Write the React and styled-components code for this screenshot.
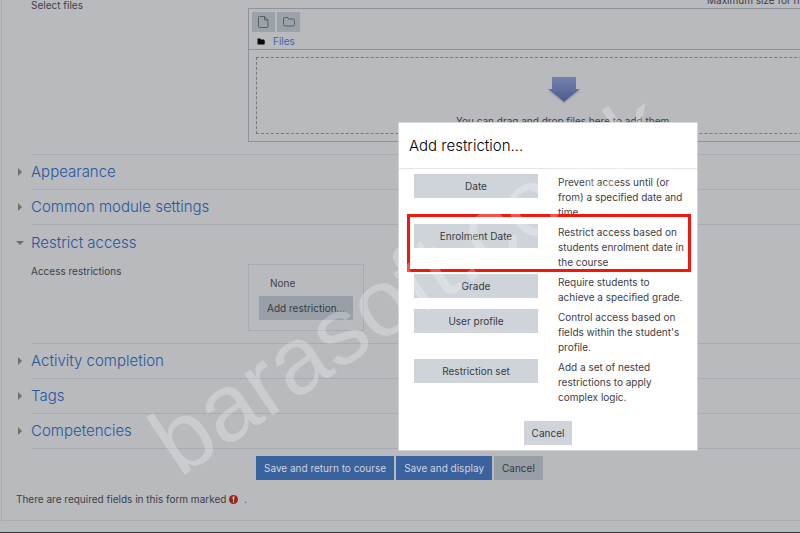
import React from "react";
import styled, { createGlobalStyle, css } from "styled-components";

const GlobalStyle = createGlobalStyle`
  * {
    box-sizing: border-box;
  }
  html,
  body {
    margin: 0;
    height: 100%;
    overflow: hidden;
  }
  body {
    font-family: Inter, "Liberation Sans", sans-serif;
    font-size: 10px;
    line-height: 15px;
    color: #3d4045;
    background-color: #b8babe;
  }
`;

const Page = styled.div`
  position: relative;
  display: flex;
  flex-direction: column;
  min-height: 100vh;
  overflow: hidden;
`;
const Main = styled.main`
  margin: -7px -93px 11px 1px;
  padding: 0 12px 13px 14px;
  border: 1px solid #abadb1;
  border-top: none;
`;
const Footer = styled.footer`
  flex: 1;
  background-color: #33373f;
`;
const Field = styled.div`
  display: grid;
  grid-template-columns: 217px minmax(0, 1fr);
`;
const FieldLabel = styled.div`
  padding-top: ${(props) => props.$top}px;
`;
const SizeNote = styled.div`
  padding-left: 459px;
  white-space: nowrap;
`;
const FileManager = styled.div`
  border: 1px solid #909297;
  height: 134px;
  display: flex;
  flex-direction: column;
`;
const Toolbar = styled.div`
  display: flex;
  gap: 2px;
  padding: 3px 3px 1px;
`;
const ToolButton = styled.button`
  width: 23px;
  height: 20px;
  padding: 0;
  border: none;
  background-color: #9ba2a9;
  color: #5a5f65;
  display: flex;
  align-items: center;
  justify-content: center;
`;
const PathBar = styled.div`
  display: flex;
  align-items: center;
  gap: 8px;
  padding: 0 8px;
  height: 16px;
`;
const DropArea = styled.div`
  flex: 1;
  border-top: 1px solid #909297;
  padding: 7px;
`;
const DropZone = styled.div`
  height: 100%;
  border: 1px dashed #76787c;
  display: flex;
  flex-direction: column;
  align-items: center;
  gap: 10px;
  padding-top: 18px;
`;
const Link = styled.a`
  color: #3a63ab;
  text-decoration: none;
`;
const Section = styled.section`
  margin-left: 15px;
  border-bottom: 1px solid #a8abaf;
`;
const Toggle = styled.button`
  display: flex;
  align-items: center;
  gap: 7px;
  height: ${(props) => (props.$open ? 36 : 34)}px;
  margin-left: -15px;
  padding: 0;
  border: none;
  background: none;
  color: #27579d;
  font-family: inherit;
  font-size: 15px;
  font-weight: 300;
  line-height: 20px;
`;
const Arrow = styled.svg`
  width: 8px;
  height: 8px;
  fill: #6d6f73;
`;
const Body = styled.div`
  padding-bottom: 12px;
`;
const Restrictions = styled.div`
  justify-self: start;
  display: flex;
  flex-direction: column;
  align-items: flex-start;
  gap: 5px;
  margin-top: 3px;
  padding: 11px 10px 10px;
  border: 1px solid #a8abaf;
`;
const None = styled.span`
  padding-left: 11px;
`;
const Button = styled.button`
  height: 24px;
  padding: 0 8px;
  border: none;
  font-family: inherit;
  font-size: 10px;
  line-height: 15px;
  white-space: nowrap;
  color: #373a3f;
  background-color: #ced4d9;
  ${(props) =>
    props.$dimmed &&
    css`
      background-color: #989fa6;
    `}
  ${(props) =>
    props.$primary &&
    css`
      color: #d0d5dd;
      background-color: #39629e;
    `}
`;
const Actions = styled.div`
  display: flex;
  gap: 2px;
  padding: 7px 0 0 240px;
`;
const Required = styled.p`
  display: flex;
  align-items: center;
  gap: 3px;
  margin: 12px 0 0;
`;

const Modal = styled.div`
  position: absolute;
  top: 122px;
  left: 398px;
  width: 300px;
  border: 1px solid #d4d5d7;
  background-color: #fff;
`;
const ModalTitle = styled.h2`
  margin: 0;
  padding: 13px 10px 12px;
  border-bottom: 1px solid #e3e5e8;
  font-size: 15px;
  font-weight: 300;
  line-height: 20px;
  color: #000;
`;
const Options = styled.ul`
  display: flex;
  flex-direction: column;
  gap: 4px;
  margin: 0;
  padding: 5px 11px 0 15px;
  list-style: none;
`;
const Option = styled.li`
  position: relative;
  display: grid;
  grid-template-columns: 124px minmax(0, 1fr);
  gap: 20px;
  align-items: start;
`;
const Description = styled.span`
  padding-top: 1px;
`;
const Highlight = styled.div`
  position: absolute;
  inset: -10px -5px -2px -7px;
  border: 3px solid #f0180c;
  pointer-events: none;
`;
const ModalFooter = styled.div`
  display: flex;
  justify-content: center;
  padding: 16px 0 5px;
`;
const Watermark = styled.div`
  position: absolute;
  top: 229px;
  left: 110px;
  font-family: "Liberation Sans", Arial, sans-serif;
  font-size: 95px;
  line-height: 110px;
  color: rgba(255, 255, 255, 0.26);
  transform: rotate(-34deg);
  white-space: nowrap;
  pointer-events: none;
`;

const options = [
  {
    name: "Date",
    text: "Prevent access until (or from) a specified date and time.",
  },
  {
    name: "Enrolment Date",
    text: "Restrict access based on students enrolment date in the course",
    highlight: true,
  },
  { name: "Grade", text: "Require students to achieve a specified grade." },
  {
    name: "User profile",
    text: "Control access based on fields within the student's profile.",
  },
  {
    name: "Restriction set",
    text: "Add a set of nested restrictions to apply complex logic.",
  },
];

const FormSection = ({ title, open, children }) => (
  <Section>
    {title && (
      <Toggle type="button" aria-expanded={!!open} $open={open}>
        <Arrow viewBox="0 0 8 8">
          <path d={open ? "M0 2h8L4 6z" : "M2 0l4 4-4 4z"} />
        </Arrow>
        {title}
      </Toggle>
    )}
    {children && <Body>{children}</Body>}
  </Section>
);

const App = () => {
  return (
    <Page>
      <GlobalStyle />
      <Main>
        <FormSection>
          <Field>
            <FieldLabel $top={5}>Select files</FieldLabel>
            <div>
              <SizeNote>Maximum size for new files</SizeNote>
              <FileManager>
                <Toolbar>
                  <ToolButton type="button" aria-label="Add file">
                    <svg width="11" height="12" viewBox="0 0 11 12" fill="none" stroke="currentColor">
                      <path d="M1.500.5h5l3.500 3.500v6.500a1 1 0 0 1-1 1H1.500a1 1 0 0 1-1-1v-9a1 1 0 0 1 1-1zM6.500.5V4H10" />
                    </svg>
                  </ToolButton>
                  <ToolButton type="button" aria-label="Create folder">
                    <svg width="12" height="10" viewBox="0 0 12 10" fill="none" stroke="currentColor">
                      <path d="M2 .5h2.500L5.500 2H10a1.500 1.500 0 0 1 1.500 1.500v4A1.500 1.500 0 0 1 10 9H2A1.500 1.500 0 0 1 .5 7.500V2A1.500 1.500 0 0 1 2 .5z" />
                    </svg>
                  </ToolButton>
                </Toolbar>
                <PathBar>
                  <svg width="8" height="7" viewBox="0 0 8 7" fill="#08090a">
                    <path d="M.5.5H3l1 1h3v1h1l-.5 4h-7z" />
                  </svg>
                  <Link href="#files">Files</Link>
                </PathBar>
                <DropArea>
                  <DropZone>
                    <svg width="34" height="28" viewBox="0 0 34 28">
                      <defs>
                        <linearGradient id="arrow" x1="0" y1="0" x2="0" y2="1">
                          <stop offset="0" stopColor="#7584ae" />
                          <stop offset="1" stopColor="#4a5a92" />
                        </linearGradient>
                      </defs>
                      <path d="M5 2h24v13h5L17 28 0 15h5z" fill="#a9acb3" />
                      <path d="M5 1h24v12h4L17 26 1 13h4z" fill="url(#arrow)" />
                    </svg>
                    <span>You can drag and drop files here to add them.</span>
                  </DropZone>
                </DropArea>
              </FileManager>
            </div>
          </Field>
        </FormSection>
        <FormSection title="Appearance" />
        <FormSection title="Common module settings" />
        <FormSection title="Restrict access" open>
          <Field>
            <FieldLabel $top={3}>Access restrictions</FieldLabel>
            <Restrictions>
              <None>None</None>
              <Button type="button" $dimmed>
                Add restriction...
              </Button>
            </Restrictions>
          </Field>
        </FormSection>
        <FormSection title="Activity completion" />
        <FormSection title="Tags" />
        <FormSection title="Competencies" />
        <Actions>
          <Button type="submit" $primary>
            Save and return to course
          </Button>
          <Button type="submit" $primary>
            Save and display
          </Button>
          <Button type="button" $dimmed>
            Cancel
          </Button>
        </Actions>
        <Required>
          There are required fields in this form marked
          <svg width="9" height="9" viewBox="0 0 9 9">
            <circle cx="4.500" cy="4.500" r="4.500" fill="#98291f" />
            <path d="M3.500 1.500h2L5 5.500H4zM4 6h1v1.500H4z" fill="#d5cfcf" />
          </svg>
          <span>&nbsp;.</span>
        </Required>
      </Main>
      <Footer />

      <Modal role="dialog" aria-labelledby="modal-title">
        <ModalTitle id="modal-title">Add restriction...</ModalTitle>
        <Options>
          {options.map((option) => (
            <Option key={option.name}>
              <Button type="button">{option.name}</Button>
              <Description>{option.text}</Description>
              {option.highlight && <Highlight />}
            </Option>
          ))}
        </Options>
        <ModalFooter>
          <Button type="button">Cancel</Button>
        </ModalFooter>
      </Modal>
      <Watermark aria-hidden="true">barasoft.co.uk</Watermark>
    </Page>
  );
};

export default App;
